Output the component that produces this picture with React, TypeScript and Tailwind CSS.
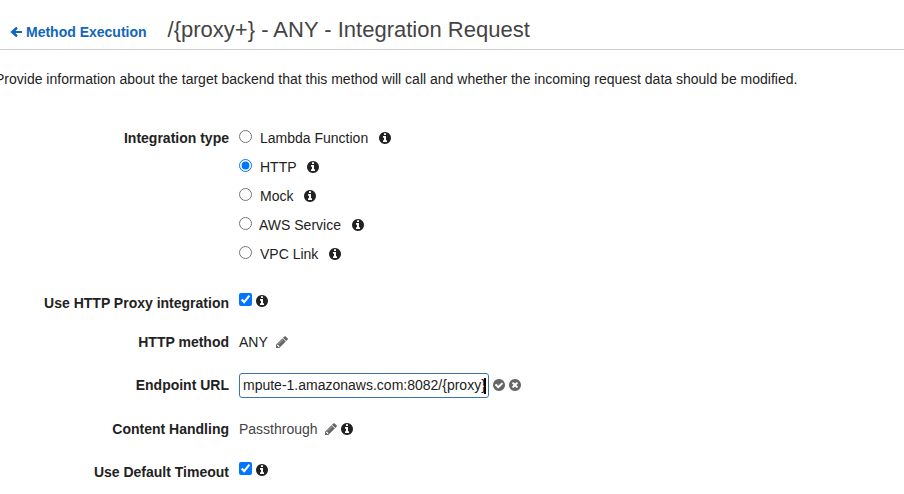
import type { ReactNode } from "react";

const DISC =
  "M1664 896q0 209-103 385.500t-279.500 279.500-385.500 103-385.500-103-279.500-279.500-103-385.500 103-385.500 279.500-279.500 385.500-103 385.500 103 279.500 279.500 103 385.500z";

const PATHS = {
  info:
    "M1152 1376v-160q0-14-9-23t-23-9h-96v-512q0-14-9-23t-23-9h-320q-14 0-23 9t-9 23v160q0 14 9 23t23 9h96v320h-96q-14 0-23 9t-9 23v160q0 14 9 23t23 9h448q14 0 23-9t9-23zM1024 480v-160q0-14-9-23t-23-9h-192q-14 0-23 9t-9 23v160q0 14 9 23t23 9h192q14 0 23-9t9-23z" + DISC,
  check:
    "M1412 734q0-28-18-46l-91-90q-19-19-45-19t-45 19l-408 407-226-226q-19-19-45-19t-45 19l-91 90q-18 18-18 46 0 27 18 45l362 362q19 19 45 19 27 0 46-19l543-543q18-18 18-45z" + DISC,
  cross:
    "M1277 1122q0-26-19-45l-181-181 181-181q19-19 19-45 0-27-19-46l-90-90q-19-19-46-19-26 0-45 19l-181 181-181-181q-19-19-45-19-27 0-46 19l-90 90q-19 19-19 46 0 26 19 45l181 181-181 181q-19 19-19 45 0 27 19 46l90 90q19 19 46 19 26 0 45-19l181-181 181 181q19 19 45 19 27 0 46-19l90-90q19-19 19-46z" + DISC,
  pencil:
    "M491 1536l91-91-235-235-91 91v107h128v128h107zm523-928q0-22-22-22-10 0-17 7l-542 542q-7 7-7 17 0 22 22 22 10 0 17-7l542-542q7-7 7-17zm-54-192l416 416-832 832h-416v-416zm683 96q0 53-37 90l-166 166-416-416 166-165q36-38 90-38 53 0 91 38l235 234q37 39 37 91z",
  arrow:
    "M1664 790v212q0 34-34 34h-800l270 280q34 34 0 68l-150 150q-34 34-68 0l-676-604q-34-34 0-68l676-604q34-34 68 0l150 150q34 34 0 68l-270 280h800q34 0 34 34z",
};

function Icon({ name, className = "" }: { name: keyof typeof PATHS; className?: string }) {
  return (
    <svg viewBox="0 0 1792 1792" className={`size-[14px] shrink-0 ${className}`} fill="currentColor" fillRule="evenodd">
      <path d={PATHS[name]} />
    </svg>
  );
}

function Row({ label, className, children }: { label: string; className: string; children: ReactNode }) {
  return (
    <div className={`flex ${className}`}>
      <div className="w-[229px] shrink-0 text-right font-bold">{label}</div>
      <div className="ml-[10px] flex items-center">{children}</div>
    </div>
  );
}

const TYPES = ["Lambda Function", "HTTP", "Mock", "AWS Service", "VPC Link"];

export default function App() {
  return (
    <main className="h-[494px] w-full overflow-hidden bg-white font-['Liberation_Sans',Arial,sans-serif] text-[14px] leading-5 whitespace-nowrap text-[#222]">
      <header className="flex h-[50px] border-b border-[#ccc] pl-[9px]">
        <a className="flex h-5 items-center self-start mt-[22px] font-bold text-[#1166bb]">
          <Icon name="arrow" className="mr-[3px]" />
          Method Execution
        </a>
        <h1 className="ml-[21px] mt-[16px] text-[22px] leading-7 text-[#444]">
          /{"{proxy+}"} - ANY - Integration Request
        </h1>
      </header>
      <p className="-ml-[5px] mt-[19px] h-5">
        Provide information about the target backend that this method will call and whether the incoming request data should be modified.
      </p>
      <form className="mt-[39px]">
        <Row label="Integration type" className="h-[145px]">
          <div className="flex flex-col gap-[9px] self-start">
            {TYPES.map((type) => (
              <label key={type} className="flex h-5 items-center">
                <input type="radio" name="type" defaultChecked={type === "HTTP"} className="mr-2 -mt-[3px] size-[13px]" />
                <span className={type === "AWS Service" ? "-ml-px" : ""}>{type}</span>
                <Icon name="info" className="ml-[9.8px]" />
              </label>
            ))}
          </div>
        </Row>
        <Row label="Use HTTP Proxy integration" className="mt-5 h-5">
          <input type="checkbox" defaultChecked className="-mt-[7px] size-[13px]" />
          <Icon name="info" className="-mt-1 ml-[3px]" />
        </Row>
        <Row label="HTTP method" className="mt-[19px] h-5">
          ANY
          <Icon name="pencil" className="ml-[7px] text-[#666]" />
        </Row>
        <Row label="Endpoint URL" className="mt-[21px] h-[25px] leading-[25px]">
          <div className="flex h-[25px] w-[250px] items-center rounded-[3px] border border-[#3b73af] pl-[3px]">
            <span>mpute-1.amazonaws.com:8082/{"{proxy}"}</span>
            <span className="-ml-[2px] h-4 w-[2px] shrink-0 bg-black" />
          </div>
          <Icon name="check" className="-mt-px ml-[3px] text-[#666]" />
          <Icon name="cross" className="-mt-px ml-[2px] text-[#666]" />
        </Row>
        <Row label="Content Handling" className="mt-[21px] h-5">
          <span className="text-[#444]">Passthrough</span>
          <Icon name="pencil" className="ml-[6.5px] text-[#666]" />
          <Icon name="info" className="ml-[2px]" />
        </Row>
        <Row label="Use Default Timeout" className="mt-[23px] h-5">
          <input type="checkbox" defaultChecked className="-mt-[7px] size-[13px]" />
          <Icon name="info" className="-mt-1 ml-[3px]" />
        </Row>
      </form>
    </main>
  );
}
